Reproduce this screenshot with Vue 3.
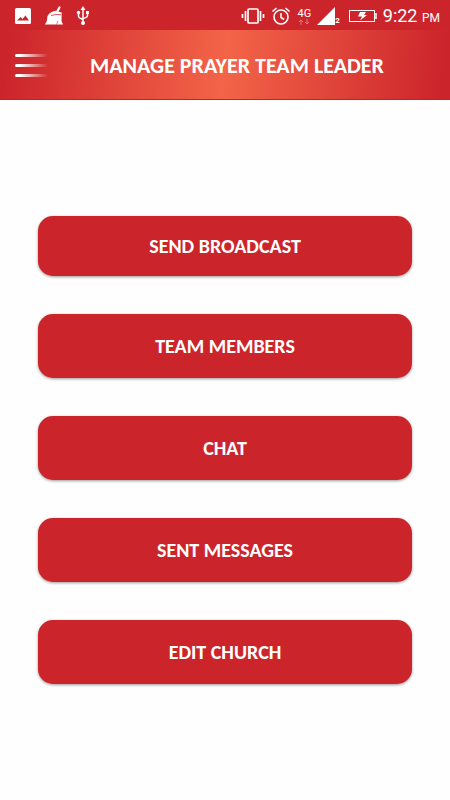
<template>
  <div class="screen">
    <!-- Phone status bar -->
    <div class="status-bar">
      <div class="status-group left">
        <svg width="18" height="18" viewBox="0 0 18 18">
          <path fill="#fff" fill-rule="evenodd" d="M2.500 1h13q1.500 0 1.500 1.500v13q0 1.500-1.500 1.500h-13q-1.500 0-1.500-1.500v-13q0-1.500 1.500-1.500zM3 13.500h12l-3.500-5-3 3.500-2-2z" />
        </svg>
        <svg width="20" height="20" viewBox="0 0 20 20">
          <path d="M13 6l2.500-4.500" stroke="#fff" stroke-width="2.200" stroke-linecap="round" />
          <path fill="#fff" d="M3.500 10q3-5 8.500-5.200l5.500 1.700q.8 1.500.2 2.500l-.2 6 1.500 3.500H1q2.500-3.500 2.500-8.500z" />
          <path d="M7 9.500q4-1.500 10.500-.8" fill="none" stroke="#cc242b" stroke-width="0.800" />
          <path d="M12.500 18.500q1-1.500 1-3.500" fill="none" stroke="#cc242b" stroke-width="0.600" />
        </svg>
        <svg width="14" height="20" viewBox="0 0 14 20" fill="none" stroke="#fff" stroke-width="1.500">
          <path d="M7 3v13M2.500 7v3q0 2 4.500 3.500M11.500 7v2.500q0 2-4.500 3" />
          <path fill="#fff" stroke="none" d="M7 0l2.500 4h-5zM10 5h3v3h-3z" />
          <circle cx="2.500" cy="6.500" r="1.700" fill="#fff" stroke="none" />
          <circle cx="7" cy="17" r="2" fill="#fff" stroke="none" />
        </svg>
      </div>

      <div class="status-group right">
        <svg width="24" height="20" viewBox="0 0 24 20" fill="none" stroke="#fff" stroke-width="1.700">
          <rect x="7" y="3" width="10" height="14" rx="1" />
          <path d="M4.500 5v10M1.500 8v4M19.500 5v10M22.500 8v4" />
        </svg>
        <svg width="20" height="20" viewBox="0 0 20 20" fill="none" stroke="#fff" stroke-width="1.600">
          <circle cx="10" cy="11" r="7" />
          <path d="M10 7v4.500l3 2M1.500 5.500l4-3.500M18.500 5.500l-4-3.500" />
        </svg>
        <div class="network">
          <span>4G</span>
          <svg width="12" height="6" viewBox="0 0 12 6" fill="none" stroke="#e8777a">
            <path d="M3 6v-5M1 3l2-2 2 2M9 0v5M7 3l2 2 2-2" />
          </svg>
        </div>
        <div class="signal">
          <svg width="18" height="18" viewBox="0 0 18 18">
            <path d="M18 0v18h-18z" fill="#fff" />
          </svg>
          <span>2</span>
        </div>
        <svg class="battery" width="28" height="14" viewBox="0 0 28 14">
          <rect x="0.500" y="1.500" width="25" height="11" fill="none" stroke="#fff" />
          <path d="M27 4v6" stroke="#fff" stroke-width="1.500" />
          <path d="M11 3h6l-2 3h3l-7 5.500 2-4h-4z" fill="#fff" />
        </svg>
        <span class="time">9:22 <small>PM</small></span>
      </div>
    </div>

    <header class="header">
      <button class="menu-button" type="button" aria-label="Menu">
        <span></span>
        <span></span>
        <span></span>
      </button>
      <h1>MANAGE PRAYER TEAM LEADER</h1>
    </header>

    <main class="actions">
      <button
        v-for="action in actions"
        :key="action"
        class="action-button"
        type="button"
      >
        {{ action }}
      </button>
    </main>
  </div>
</template>

<script setup>
const actions = [
  'SEND BROADCAST',
  'TEAM MEMBERS',
  'CHAT',
  'SENT MESSAGES',
  'EDIT CHURCH'
]
</script>

<style>
body {
  margin: 0;
  background: #fff;
}
</style>

<style scoped>
.screen {
  min-height: 100vh;
  background: #fefefe;
  color: #fff;
  font-family: Carlito, Lato, sans-serif;
}

.status-bar {
  display: flex;
  align-items: center;
  justify-content: space-between;
  height: 30px;
  box-sizing: border-box;
  padding: 2px 10px 0 14px;
  background: #cc242b;
  font-family: Roboto, sans-serif;
}

.status-group {
  display: flex;
  align-items: center;
}

.left {
  gap: 12px;
}

.right {
  gap: 6px;
}

.network {
  display: flex;
  flex-direction: column;
  align-items: center;
  font-size: 11px;
  line-height: 11px;
}

.signal {
  display: flex;
  align-items: flex-end;
  font-size: 8px;
  font-weight: bold;
  line-height: 8px;
}

.battery {
  margin-left: 3px;
}

.time {
  padding-top: 2px;
  font-size: 18px;
  line-height: 24px;
  white-space: nowrap;
}

.time small {
  font-size: 12px;
}

.header {
  display: flex;
  align-items: center;
  height: 70px;
  box-sizing: border-box;
  padding: 2px 15px 0;
  border-bottom: 1px solid #b32a2c;
  background: linear-gradient(96deg, #cc242b 2%, #f36448 50%, #cc242b 98%);
}

.menu-button {
  display: flex;
  flex-direction: column;
  gap: 7px;
  width: 33px;
  padding: 0;
  border: 0;
  background: none;
}

.menu-button span {
  height: 3px;
  border-radius: 2px;
  background: linear-gradient(90deg, #fff 15%, rgba(255, 255, 255, 0));
}

h1 {
  flex: 1;
  margin: 0 0 0 42px;
  font-size: 22px;
  line-height: 28px;
  white-space: nowrap;
}

.actions {
  display: flex;
  flex-direction: column;
  gap: 38px;
  padding: 116px 38px;
}

.action-button {
  height: 64px;
  border: 0;
  border-radius: 15px;
  background: #cc242b;
  box-shadow: 0 1px 3px rgba(0, 0, 0, 0.4);
  color: #fff;
  font-family: inherit;
  font-size: 20px;
  font-weight: bold;
}

.action-button:first-child {
  height: 60px;
}
</style>
